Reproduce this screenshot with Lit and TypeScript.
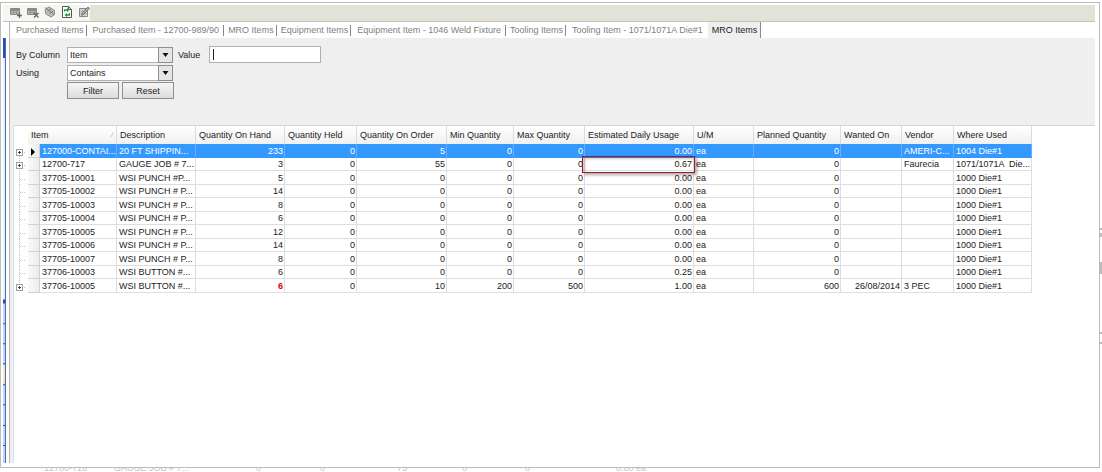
import { LitElement, html, css, svg, nothing } from "lit";
import { customElement, state } from "lit/decorators.js";
import { classMap } from "lit/directives/class-map.js";

interface Column {
  label: string;
  width: number;
  numeric?: boolean;
  span?: number;
}

interface Row {
  expandable?: boolean;
  low?: boolean;
  cells: string[];
}

const COLUMNS: Column[] = [
  { label: "Item", width: 77, span: 2 },
  { label: "Description", width: 79 },
  { label: "Quantity On Hand", width: 89, numeric: true },
  { label: "Quantity Held", width: 72, numeric: true },
  { label: "Quantity On Order", width: 90, numeric: true },
  { label: "Min Quantity", width: 67, numeric: true },
  { label: "Max Quantity", width: 71, numeric: true },
  { label: "Estimated Daily Usage", width: 109, numeric: true },
  { label: "U/M", width: 60 },
  { label: "Planned Quantity", width: 87, numeric: true },
  { label: "Wanted On", width: 61, numeric: true },
  { label: "Vendor", width: 52 },
  { label: "Where Used", width: 78 },
];

const GUTTERS = [14, 12];

const punch = (item: string, qty: string, desc = "WSI PUNCH # P...", usage = "0.00"): Row => ({
  cells: [item, desc, qty, "0", "0", "0", "0", usage, "ea", "0", "", "", "1000 Die#1"],
});

const ROWS: Row[] = [
  {
    expandable: true,
    cells: ["127000-CONTAI...", "20 FT SHIPPIN...", "233", "0", "5", "0", "0", "0.00", "ea", "0", "", "AMERI-C...", "1004 Die#1"],
  },
  {
    expandable: true,
    cells: ["12700-717", "GAUGE JOB # 7...", "3", "0", "55", "0", "0", "0.67", "ea", "0", "", "Faurecia", "1071/1071A  Die..."],
  },
  punch("37705-10001", "5", "WSI PUNCH #P..."),
  punch("37705-10002", "14"),
  punch("37705-10003", "8"),
  punch("37705-10004", "6"),
  punch("37705-10005", "12"),
  punch("37705-10006", "14"),
  punch("37705-10007", "8"),
  punch("37706-10003", "6", "WSI BUTTON #...", "0.25"),
  {
    expandable: true,
    low: true,
    cells: ["37706-10005", "WSI BUTTON #...", "6", "0", "10", "200", "500", "1.00", "ea", "600", "26/08/2014", "3 PEC", "1000 Die#1"],
  },
];

const TABS = [
  { label: "Purchased Items" },
  { label: "Purchased Item - 12700-989/90", detail: true },
  { label: "MRO Items" },
  { label: "Equipment Items" },
  { label: "Equipment Item - 1046 Weld Fixture", detail: true },
  { label: "Tooling Items" },
  { label: "Tooling Item - 1071/1071A Die#1", detail: true },
  { label: "MRO Items" },
];

const grid = svg`
  <path d="M0.5 2.5h9v6h-9z" fill="#b9b9b5" stroke="#888"/>
  <path d="M1 4h8" stroke="#777" stroke-width="1.4"/>
  <path d="M1 6.5h8M3.5 4v4M6.5 4v4" stroke="#8d8d8a" stroke-width=".7"/>`;

const TOOLS = [
  { label: "Add item", icon: svg`${grid}<path d="M9.500 7v5M7 9.500h5" stroke="#666" stroke-width="1.300"/>` },
  { label: "Delete item", icon: svg`${grid}<path d="M7 7l4.500 4.500M11.500 7l-4.500 4.500" stroke="#666" stroke-width="1.300"/>` },
  {
    label: "Item tag",
    icon: svg`<path d="M1 3.500l4-2.500 5.500 3.500v4l-3.500 2.500-5-3z" fill="#c2c2be" stroke="#888"/>
      <path d="M1 1.500l9 7M3.500 5.500l3.500-2.500M5 8l4-3" stroke="#777"/>`,
  },
  {
    label: "Refresh",
    icon: svg`<path d="M1.500 .500h6l3 3v8h-9z" fill="#fff" stroke="#555"/><path d="M7.500 .500v3h3" fill="none" stroke="#555"/>
      <path d="M3.500 5.500v-1.500h3M8.500 7v2h-3" fill="none" stroke="#1d9a35" stroke-width="1.300"/>
      <path d="M6 2l2.500 2-2.500 2zM6 7l-2.500 2 2.500 2z" fill="#1d9a35"/>`,
  },
  {
    label: "Edit",
    icon: svg`<path d="M1.500 2.500h8v8h-8z" fill="#dededa" stroke="#888"/>
      <path d="M2 5h7M2 7.500h7M4 3v7M7 3v7" stroke="#aaa" stroke-width=".7"/>
      <path d="M3.500 9.500l1-3 5.500-5.500 1.500 1.500-5.500 5.500z" fill="#aaa" stroke="#666" stroke-width=".8"/>`,
  },
];

@customElement("app-root")
export class AppRoot extends LitElement {
  @state() private activeTab = 7;
  @state() private selected = 0;

  static styles = css`
    :host {
      display: flex;
      flex-direction: column;
      height: 100vh;
      overflow: hidden;
      box-sizing: border-box;
      padding-top: 2px;
      background: #fff;
      color: #222;
      font: 9px/12px "Liberation Sans", Arial, sans-serif;
    }
    * { box-sizing: border-box; }
    button, select, input { font: inherit; color: inherit; margin: 0; border-radius: 0; }
    .middle { flex: 1; display: flex; min-height: 0; }
    .window {
      flex: 1;
      min-width: 0;
      display: flex;
      border: 1px solid #bcbcbc;
      padding: 2px 4px 4px 2px;
    }
    .behind { flex: none; width: 2px; }
    .behind svg { display: block; width: 2px; height: 100%; }
    .edge { flex: none; width: 6px; display: flex; padding-top: 16px; }
    .edge svg { width: 6px; height: 100%; display: block; }
    .main { flex: 1; min-width: 0; display: flex; flex-direction: column; }
    .toolbar {
      height: 17px;
      background: #e2e3d6;
      border-bottom: 1px solid #c2c3b8;
    }
    .tools {
      width: 87px;
      height: 16px;
      padding-left: 7px;
      display: flex;
      gap: 5px;
      background: #f5f5f1;
    }
    .tools button { flex: none; border: 0; padding: 0; width: 12px; height: 14px; background: none; }
    .tools svg { display: block; width: 12px; height: 12px; }
    .body { flex: 1; min-height: 0; display: flex; }
    .content {
      flex: 1;
      min-width: 0;
      display: flex;
      flex-direction: column;
      border-left: 1px solid #b9b3b8;
    }
    .tabs { display: flex; height: 16px; background: #fff; }
    .tab {
      flex: none;
      border: 0;
      padding: 0 3px 0 4px;
      color: #808080;
      line-height: 16px;
      white-space: nowrap;
      background: linear-gradient(#888, #888) right center / 1px 11px no-repeat;
    }
    .tab:first-child { padding-left: 6px; }
    .detail { padding: 0 5px 0 6px; }
    .before { background: none; }
    .active {
      color: #222;
      background: #efefef;
      border-right: 1px solid #8c8c8c;
    }
    .filter {
      background: #efefef;
      padding: 8px 6px 26px;
      display: grid;
      grid-template-columns: 51px 106px 36px 112px;
      grid-template-rows: 17px 17px 17px;
      row-gap: 1px;
      align-items: center;
    }
    label { padding-left: 0; white-space: nowrap; }
    .filter { padding-left: 6px; }
    .value { padding-left: 5px; }
    .combo { position: relative; display: flex; height: 16px; }
    .combo select {
      appearance: none;
      width: 100%;
      border: 1px solid #b0b0b0;
      background: #fff;
      padding: 0 16px 0 2px;
      outline: 0;
    }
    .combo svg { position: absolute; right: 0; top: 0; width: 15px; height: 16px; pointer-events: none; }
    .text {
      width: 100%;
      height: 17px;
      border: 1px solid #b0b0b0;
      padding: 0 3px;
      outline: 0;
      background: linear-gradient(#222, #222) 3px center / 1px 11px no-repeat #fff;
    }
    .actions { grid-column: 2 / 5; display: flex; gap: 3px; }
    .actions button {
      width: 52px;
      height: 17px;
      padding: 0;
      border: 1px solid #8e8e8e;
      background: linear-gradient(#f6f6f6, #dcdcdc);
    }
    .pane { flex: 1; min-height: 0; background: #efefef; padding-left: 3px; display: flex; }
    .sheet { flex: 1; min-width: 0; background: #fff; border-top: 1px solid #d4d4d4; border-left: 1px solid #d5e2ec; }
    table { table-layout: fixed; border-collapse: separate; border-spacing: 0; }
    th, td {
      padding: 0 2px;
      white-space: nowrap;
      text-align: left;
      font-weight: normal;
      line-height: 12px;
      vertical-align: middle;
    }
    .cell { white-space: pre; }
    th {
      height: 18px;
      padding: 0 3px;
      background: linear-gradient(#fff, #f0f0f0);
      border-right: 1px solid #dcdcdc;
    }
    th.tree { background: none; border: 0; }
    .sort { float: right; color: #999; font-size: 7px; }
    td { height: 13px; border-right: 1px solid #dedede; border-bottom: 1px solid #dedede; }
    tr:nth-child(odd) td { height: 14px; }
    td.tree { border: 0; padding: 0; }
    td.tree svg { display: block; width: 14px; height: 13px; }
    td.mark svg { display: block; width: 11px; height: 12px; }
    td.mark { padding: 0; background: linear-gradient(90deg, #fafafa, #ececec); border-color: #d0d0d0; }
    td.num { text-align: right; padding-right: 1px; }
    .selected .cell { background: #3399ff; color: #fff; border-bottom-color: #3399ff; border-right-color: #62b0ff; }
    .cell.low { color: #e00000; font-weight: bold; }
    .marked { position: relative; }
    .callout {
      position: absolute;
      inset: -2px -2px -3px -3px;
      border: 1px solid #a3182c;
      box-shadow: 2px 2px 3px #0005, inset 2px 2px 3px #0003;
    }
    .ghost { flex: none; height: 4px; overflow: hidden; display: flex; align-items: flex-end; color: #c4c4c4; padding-left: 44px; }
    .ghost span { flex: none; line-height: 12px; height: 10px; }
    .ghost .n { text-align: right; }
  `;

  private renderTree(i: number) {
    const row = ROWS[i];
    const last = i === ROWS.length - 1;
    return html`<svg viewBox="0 0 14 13" aria-hidden="true">
      <path d="M5.500 ${i ? 0 : 7}V${last ? 7 : 13}M6 7.500h6" stroke="#c4c4c4" stroke-dasharray="1 1" fill="none"/>
      ${row.expandable
        ? svg`<rect x="2.500" y="4.500" width="6" height="6" fill="#fff" stroke="#a0a0a0"/>
            <path d="M4 7.500h3M5.500 6v3" stroke="#444"/>`
        : nothing}
    </svg>`;
  }

  private renderRow(row: Row, i: number) {
    return html`<tr class=${classMap({ selected: i === this.selected })} @click=${() => (this.selected = i)}>
      <td class="tree">${this.renderTree(i)}</td>
      <td class="mark">
        ${i === this.selected
          ? html`<svg viewBox="0 0 11 12" aria-hidden="true"><path d="M3 3l4 4-4 4z" fill="#000"/></svg>`
          : nothing}
      </td>
      ${row.cells.map((text, c) => {
        const marked = i === 1 && c === 7;
        return html`<td class=${classMap({
          cell: true,
          num: !!COLUMNS[c].numeric,
          low: !!row.low && c === 2,
          marked,
        })}>${text}${marked ? html`<div class="callout"></div>` : nothing}</td>`;
      })}
    </tr>`;
  }

  private renderCombo(id: string, options: string[]) {
    return html`<div class="combo">
      <select id=${id}>${options.map((o) => html`<option>${o}</option>`)}</select>
      <svg viewBox="0 0 15 16" aria-hidden="true">
        <rect x=".5" y=".5" width="14" height="15" fill="#e6e6e6" stroke="#8e8e8e"/>
        <path d="M4.500 6h6l-3 4z" fill="#111"/>
      </svg>
    </div>`;
  }

  render() {
    const total = [...GUTTERS, ...COLUMNS.map((c) => c.width)].reduce((a, b) => a + b, 0);
    return html`
      <div class="middle">
        <div class="window">
          <div class="main">
            <div class="toolbar">
              <div class="tools" role="toolbar">
                ${TOOLS.map((t) => html`<button aria-label=${t.label}><svg viewBox="0 0 12 12">${t.icon}</svg></button>`)}
              </div>
            </div>
            <div class="body">
              <div class="edge" aria-hidden="true">
                <svg viewBox="0 0 6 426" preserveAspectRatio="none">
                  <path d="M0 0h2v20h-2z" fill="#2450a8"/>
                  <path d="M0 20h2v242h-2z" fill="#e6effc"/>
                  <path d="M0 262h2v164h-2z" fill="#bcd5fa"/>
                  <path d="M0 328h2v18h-2z" fill="#f8e6b4"/>
                  <path d="M0 262h2v4h-2zM0 286h2v1h-2zM0 306h2v1h-2zM0 326h2v1h-2zM0 347h2v1h-2zM0 367h2v1h-2zM0 388h2v1h-2zM0 408h2v1h-2z" fill="#2c4f9a"/>
                  <path d="M2 0h1v426h-1z" fill="#4a6cb5"/>
                </svg>
              </div>
              <div class="content">
                <div class="tabs" role="tablist">
                  ${TABS.map((t, i) => html`<button role="tab" aria-selected=${i === this.activeTab}
                    class=${classMap({ tab: true, detail: !!t.detail, active: i === this.activeTab, before: i === this.activeTab - 1 })}
                    @click=${() => (this.activeTab = i)}>${t.label}</button>`)}
                </div>
                <div class="filter">
                  <label for="column">By Column</label>
                  ${this.renderCombo("column", ["Item", "Description", "Vendor"])}
                  <label class="value" for="value">Value</label>
                  <input class="text" id="value" type="text" />
                  <label for="using">Using</label>
                  ${this.renderCombo("using", ["Contains", "Starts With", "Equals"])}
                  <div class="actions"><button>Filter</button><button>Reset</button></div>
                </div>
                <div class="pane">
                  <div class="sheet">
                    <table style="width:${total}px">
                      <colgroup>
                        ${GUTTERS.map((w) => html`<col style="width:${w}px" />`)}
                        ${COLUMNS.map((c) => html`<col style="width:${c.width}px" />`)}
                      </colgroup>
                      <thead>
                        <tr>
                          <th class="tree"></th>
                          ${COLUMNS.map((c) => html`<th colspan=${c.span ?? 1}>${c.label}${c.span ? html`<span class="sort">∕</span>` : nothing}</th>`)}
                        </tr>
                      </thead>
                      <tbody>${ROWS.map((r, i) => this.renderRow(r, i))}</tbody>
                    </table>
                  </div>
                </div>
              </div>
            </div>
          </div>
        </div>
        <div class="behind" aria-hidden="true">
          <svg viewBox="0 0 2 466" preserveAspectRatio="none">
            <path d="M0 226h2v2h-2zM0 231h2v4h-2zM0 260h2v12h-2zM0 330h2v2h-2zM0 340h2v2h-2z" fill="#bbb"/>
          </svg>
        </div>
      </div>
      <div class="ghost" aria-hidden="true">
        <span style="width:70px">12700-716</span><span style="width:90px">GAUGE JOB # 7...</span>
        <span class="n" style="width:57px">0</span><span class="n" style="width:64px">0</span>
        <span class="n" style="width:82px">75</span><span class="n" style="width:60px">0</span>
        <span class="n" style="width:63px">0</span><span class="n" style="width:116px">0.00 ea</span>
      </div>
    `;
  }
}
